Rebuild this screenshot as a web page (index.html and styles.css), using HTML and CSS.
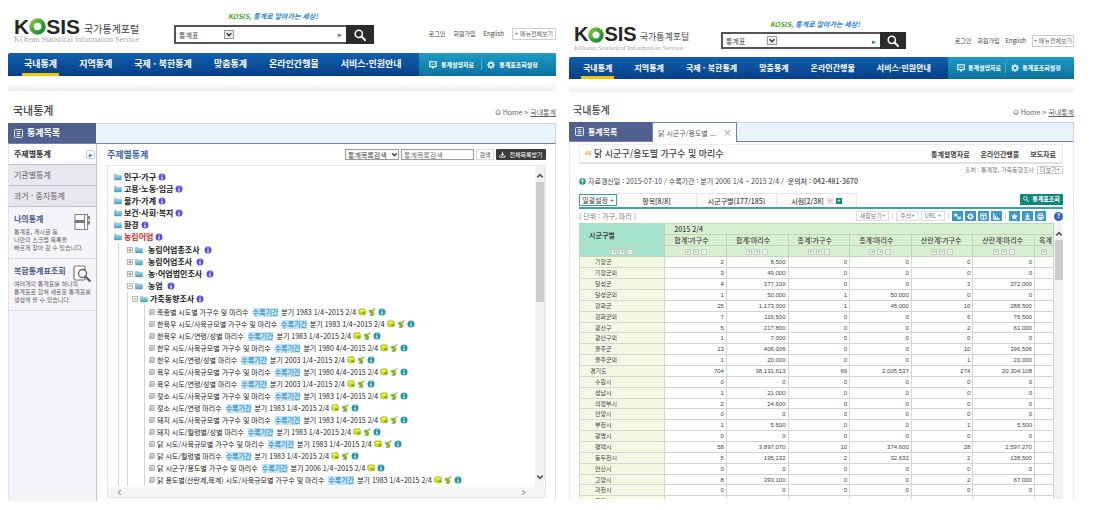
FILE: index.html
```html
<!DOCTYPE html>
<html lang="ko">
<head>
<meta charset="utf-8">
<title>KOSIS 국가통계포털</title>
<link rel="stylesheet" href="styles.css">
</head>
<body>
<svg class="defs" aria-hidden="true">
  <defs>
    <linearGradient id="green" x1="0" y1="0" x2="1" y2="1"><stop offset="0" stop-color="#8cc63a"/><stop offset=".5" stop-color="#3aa535"/><stop offset="1" stop-color="#12873a"/></linearGradient>
    <linearGradient id="blue" x1="0" y1="0" x2="0" y2="1"><stop offset="0" stop-color="#b5e2f2"/><stop offset="1" stop-color="#3f9cc4"/></linearGradient>
  </defs>
  <symbol id="i-search" viewBox="0 0 12 12"><circle cx="4.8" cy="4.8" r="3.6" fill="none" stroke="currentColor" stroke-width="1.5"/><path d="M7.5 7.5 11 11" stroke="currentColor" stroke-width="2" stroke-linecap="round"/></symbol>
  <symbol id="i-chev" viewBox="0 0 8 8"><path d="M1.3 2.6 4 5.4 6.7 2.6" fill="none" stroke="currentColor" stroke-width="1.6"/></symbol>
  <symbol id="i-board" viewBox="0 0 10 10"><path d="M1 1h8v6H6L5 9 4 7H1z" fill="none" stroke="currentColor" stroke-width="1.4"/><path d="M3 4h4" stroke="currentColor"/></symbol>
  <symbol id="i-gear" viewBox="0 0 10 10"><circle cx="5" cy="5" r="2.7" fill="none" stroke="currentColor" stroke-width="1.6"/><path d="M5 0v2M5 8v2M0 5h2M8 5h2M1.5 1.5l1.2 1.2M7.3 7.3l1.2 1.2M8.5 1.5 7.3 2.7M2.7 7.3 1.5 8.5" stroke="currentColor" stroke-width="1.3"/></symbol>
  <symbol id="i-list" viewBox="0 0 10 10"><rect x=".6" y=".6" width="8.8" height="8.8" rx="1" fill="none" stroke="currentColor"/><path d="M3 3h4M3 5h4M3 7h4" stroke="currentColor"/></symbol>
  <symbol id="i-home" viewBox="0 0 8 8"><path d="M.6 4 4 1l3.4 3M1.6 3.8V7h4.8V3.8M4 7V5" fill="none" stroke="currentColor" stroke-width=".9"/></symbol>
  <symbol id="i-folder" viewBox="0 0 8 7"><path d="M.4 1.2h2.8l.8 1h3.4v4.2H.4z" fill="url(#blue)" stroke="#5aa4c4" stroke-width=".6"/></symbol>
  <symbol id="i-info" viewBox="0 0 8 8"><circle cx="4" cy="4" r="3.5" fill="#5a4fd6"/><path d="M4 1.6v1M4 3.4v3" stroke="#fff" stroke-width="1.2"/></symbol>
  <symbol id="i-teal" viewBox="0 0 8 8"><circle cx="4" cy="4" r="3.5" fill="#2594a8"/><path d="M4 1.6v1M4 3.4v3" stroke="#fff" stroke-width="1.2"/></symbol>
  <symbol id="i-note" viewBox="0 0 8 8"><path d="M1.5.8h5L7.7 2.3v2.9L6.8 7H4L1.2 6.4.3 4.8V2.2z" fill="#cfd822" stroke="#a8b51c" stroke-width=".5"/><path d="M2 2.7h3.6" stroke="#fbffb0"/><path d="M4.3 5.2h3" stroke="#5e9427" stroke-width="1.2"/></symbol>
  <symbol id="i-leaf" viewBox="0 0 8 8"><path d="M7.4.4 4.5 2.2H1.2l.5 2.6h2L2 7.6h3.1l1-2.4-1.5-1.4z" fill="#86b82b" stroke="#5f9a22" stroke-width=".5"/></symbol>
  <symbol id="i-plus" viewBox="0 0 6 6"><rect x=".5" y=".5" width="5" height="5" fill="#fff" stroke="#999" stroke-width=".7"/><path d="M1.5 3h3M3 1.5v3" stroke="#555" stroke-width=".7"/></symbol>
  <symbol id="i-minus" viewBox="0 0 6 6"><rect x=".5" y=".5" width="5" height="5" fill="#fff" stroke="#999" stroke-width=".7"/><path d="M1.5 3h3" stroke="#555" stroke-width=".7"/></symbol>
  <symbol id="i-doc" viewBox="0 0 6 6"><rect x="1" y=".7" width="4.2" height="4.3" fill="#eee" stroke="#888" stroke-width=".7"/><path d="M2 2.2h2.4M2 3.6h2.4M.6 2v3.6h3.6" fill="none" stroke="#999" stroke-width=".6"/></symbol>
</svg>

<main class="screens">
<section class="screen">
  <header class="top">
    <a class="logo" href="#"><span class="mark">K<svg class="o" viewBox="0 0 16 16"><circle cx="8" cy="8" r="5.7" fill="none" stroke="url(#green)" stroke-width="4.2"/></svg>SIS</span><span class="name">국가통계포털</span><span class="sub">KOrean Statistical Information Service</span></a>
    <form class="find">
      <p class="slogan"><em>KOSIS,</em> 통계로 알아가는 세상!</p>
      <div class="bar">
        <label class="pick"><select aria-label="검색 구분"><option>통계표</option></select><svg><use href="#i-chev"/></svg></label>
        <input type="text" aria-label="검색어"><span class="tri">▸</span>
        <button type="button" aria-label="검색"><svg><use href="#i-search"/></svg></button>
      </div>
    </form>
    <nav class="util"><a href="#">로그인</a><a href="#">회원가입</a><a href="#">English</a><button type="button">+ 메뉴전체보기</button></nav>
  </header>
  <nav class="gnb">
    <div class="menu"><a class="on" href="#">국내통계</a><a href="#">지역통계</a><a href="#">국제 · 북한통계</a><a href="#">맞춤통계</a><a href="#">온라인간행물</a><a href="#">서비스·민원안내</a></div>
    <div class="quick"><a href="#"><svg><use href="#i-board"/></svg>통계설명자료</a><a href="#"><svg><use href="#i-gear"/></svg>통계표조회설정</a></div>
  </nav>
  <div class="strip"></div>
  <div class="head"><h1>국내통계</h1><p class="crumb"><svg><use href="#i-home"/></svg> Home &gt; <a href="#">국내통계</a></p></div>
  <div class="tabs"><a class="tab" href="#"><svg><use href="#i-list"/></svg>통계목록</a></div>
  <div class="body">
    <aside class="side">
      <a class="item on" href="#">주제별통계<span class="go">▸</span></a>
      <a class="item" href="#">기관별통계</a>
      <a class="item" href="#">과거 · 중지통계</a>
      <a class="card" href="#"><strong>나의통계</strong><span>통계표, 게시글 등<br>나만의 스크랩 목록을<br>빠르게 찾아 갈 수 있습니다.</span>
        <svg viewBox="0 0 18 18"><path d="M2 1.5h9.5v15H2zM11.5 1.5h3v15h-3" fill="#fff" stroke="#888" stroke-width="1.2"/><path d="M2 7h9.5v3H2z" fill="#777"/><path d="M14 3h3v3.5h-3zM14 8h3v3.5h-3z" fill="#888"/></svg></a>
      <a class="card" href="#"><strong>복합통계표조회</strong><span>여러개의 통계표를 하나의<br>통계표로 합쳐 새로운 통계표를<br>생성해 볼 수 있습니다.</span>
        <svg viewBox="0 0 18 18"><rect x="1" y="1" width="11" height="14" rx="1.5" fill="#fff" stroke="#777" stroke-width="1.2"/><circle cx="9.5" cy="8.5" r="4" fill="#f4f4f8" stroke="#666" stroke-width="1.3"/><path d="m12.5 11.7 4.3 4.3" stroke="#666" stroke-width="2.4" stroke-linecap="round"/></svg></a>
    </aside>
    <div class="content">
      <div class="tools"><h2>주제별통계</h2>
        <label class="mini"><select aria-label="목록 구분"><option>통계목록검색</option></select><svg><use href="#i-chev"/></svg></label>
        <input type="text" aria-label="목록 검색어" value="통계목록검색"><button type="button">검색</button>
        <button type="button" class="dark"><svg viewBox="0 0 8 8"><path d="M4 1v4M2.2 3.4 4 5.2l1.8-1.8M1 5v2h6V5" fill="none" stroke="currentColor"/></svg>전체목록받기</button></div>
      <div class="pane">
        <div class="view">
        <ul class="tree">
          <li><b><svg><use href="#i-folder"/></svg>인구·가구<svg><use href="#i-info"/></svg></b></li>
          <li><b><svg><use href="#i-folder"/></svg>고용·노동·임금<svg><use href="#i-info"/></svg></b></li>
          <li><b><svg><use href="#i-folder"/></svg>물가·가계<svg><use href="#i-info"/></svg></b></li>
          <li><b><svg><use href="#i-folder"/></svg>보건·사회·복지<svg><use href="#i-info"/></svg></b></li>
          <li><b><svg><use href="#i-folder"/></svg>환경<svg><use href="#i-info"/></svg></b></li>
          <li><b class="red"><svg><use href="#i-folder"/></svg>농림어업<svg><use href="#i-info"/></svg></b>
            <ul class="sub2">
              <li><b><svg class="ex"><use href="#i-plus"/></svg><svg><use href="#i-folder"/></svg><i>농림어업총조사</i><svg><use href="#i-info"/></svg></b></li>
              <li><b><svg class="ex"><use href="#i-plus"/></svg><svg><use href="#i-folder"/></svg><i>농림어업조사</i><svg><use href="#i-info"/></svg></b></li>
              <li><b><svg class="ex"><use href="#i-plus"/></svg><svg><use href="#i-folder"/></svg><i>농·어업법인조사</i><svg><use href="#i-info"/></svg></b></li>
              <li><b><svg class="ex"><use href="#i-minus"/></svg><svg><use href="#i-folder"/></svg><i>농업</i><svg><use href="#i-info"/></svg></b>
                <ul class="sub3"><li><b><svg class="ex"><use href="#i-minus"/></svg><svg><use href="#i-folder"/></svg>가축동향조사<svg><use href="#i-info"/></svg></b>
                  <ul class="leaves">
                    <li><svg class="ex"><use href="#i-doc"/></svg><a href="#">축종별 시도별 가구수 및 마리수</a><mark>수록기간</mark>분기 1983 1/4~2015 2/4<svg><use href="#i-note"/></svg><svg><use href="#i-leaf"/></svg><svg><use href="#i-teal"/></svg></li>
                    <li><svg class="ex"><use href="#i-doc"/></svg><a href="#">한육우 시도/사육규모별 가구수 및 마리수</a><mark>수록기간</mark>분기 1983 1/4~2015 2/4<svg><use href="#i-note"/></svg><svg><use href="#i-leaf"/></svg><svg><use href="#i-teal"/></svg></li>
                    <li><svg class="ex"><use href="#i-doc"/></svg><a href="#">한육우 시도/연령/성별 마리수</a><mark>수록기간</mark>분기 1983 1/4~2015 2/4<svg><use href="#i-note"/></svg><svg><use href="#i-leaf"/></svg><svg><use href="#i-teal"/></svg></li>
                    <li><svg class="ex"><use href="#i-doc"/></svg><a href="#">한우 시도/사육규모별 가구수 및 마리수</a><mark>수록기간</mark>분기 1980 4/4~2015 2/4<svg><use href="#i-note"/></svg><svg><use href="#i-leaf"/></svg><svg><use href="#i-teal"/></svg></li>
                    <li><svg class="ex"><use href="#i-doc"/></svg><a href="#">한우 시도/연령/성별 마리수</a><mark>수록기간</mark>분기 2003 1/4~2015 2/4<svg><use href="#i-note"/></svg><svg><use href="#i-leaf"/></svg><svg><use href="#i-teal"/></svg></li>
                    <li><svg class="ex"><use href="#i-doc"/></svg><a href="#">육우 시도/사육규모별 가구수 및 마리수</a><mark>수록기간</mark>분기 1980 4/4~2015 2/4<svg><use href="#i-note"/></svg><svg><use href="#i-leaf"/></svg><svg><use href="#i-teal"/></svg></li>
                    <li><svg class="ex"><use href="#i-doc"/></svg><a href="#">육우 시도/연령/성별 마리수</a><mark>수록기간</mark>분기 2003 1/4~2015 2/4<svg><use href="#i-note"/></svg><svg><use href="#i-leaf"/></svg><svg><use href="#i-teal"/></svg></li>
                    <li><svg class="ex"><use href="#i-doc"/></svg><a href="#">젖소 시도/사육규모별 가구수 및 마리수</a><mark>수록기간</mark>분기 1983 1/4~2015 2/4<svg><use href="#i-note"/></svg><svg><use href="#i-leaf"/></svg><svg><use href="#i-teal"/></svg></li>
                    <li><svg class="ex"><use href="#i-doc"/></svg><a href="#">젖소 시도/연령 마리수</a><mark>수록기간</mark>분기 1983 1/4~2015 2/4<svg><use href="#i-note"/></svg><svg><use href="#i-leaf"/></svg><svg><use href="#i-teal"/></svg></li>
                    <li><svg class="ex"><use href="#i-doc"/></svg><a href="#">돼지 시도/사육규모별 가구수 및 마리수</a><mark>수록기간</mark>분기 1983 1/4~2015 2/4<svg><use href="#i-note"/></svg><svg><use href="#i-leaf"/></svg><svg><use href="#i-teal"/></svg></li>
                    <li><svg class="ex"><use href="#i-doc"/></svg><a href="#">돼지 시도/월령별/성별 마리수</a><mark>수록기간</mark>분기 1983 1/4~2015 2/4<svg><use href="#i-note"/></svg><svg><use href="#i-leaf"/></svg><svg><use href="#i-teal"/></svg></li>
                    <li><svg class="ex"><use href="#i-doc"/></svg><a href="#">닭 시도/사육규모별 가구수 및 마리수</a><mark>수록기간</mark>분기 1983 1/4~2015 2/4<svg><use href="#i-note"/></svg><svg><use href="#i-leaf"/></svg><svg><use href="#i-teal"/></svg></li>
                    <li><svg class="ex"><use href="#i-doc"/></svg><a href="#">닭 시도/월령별 마리수</a><mark>수록기간</mark>분기 1983 1/4~2015 2/4<svg><use href="#i-note"/></svg><svg><use href="#i-leaf"/></svg><svg><use href="#i-teal"/></svg></li>
                    <li><svg class="ex"><use href="#i-doc"/></svg><a href="#">닭 시군구/용도별 가구수 및 마리수</a><mark>수록기간</mark>분기 2006 1/4~2015 2/4<svg><use href="#i-note"/></svg><svg><use href="#i-teal"/></svg></li>
                    <li><svg class="ex"><use href="#i-doc"/></svg><a href="#">닭 용도별(산란계,육계) 시도/사육규모별 가구수 및 마리수</a><mark>수록기간</mark>분기 1983 1/4~2015 2/4<svg><use href="#i-note"/></svg><svg><use href="#i-leaf"/></svg><svg><use href="#i-teal"/></svg></li>
                  </ul></li></ul></li>
            </ul></li>
        </ul>
        <div class="vbar"><svg class="flip"><use href="#i-chev"/></svg><span class="thumb"></span><svg><use href="#i-chev"/></svg></div>
        </div>
        <div class="hbar"><svg class="left"><use href="#i-chev"/></svg><svg class="right"><use href="#i-chev"/></svg></div>
      </div>
    </div>
  </div>
</section>

<section class="screen compact">
  <header class="top">
    <a class="logo" href="#"><span class="mark">K<svg class="o" viewBox="0 0 16 16"><circle cx="8" cy="8" r="5.7" fill="none" stroke="url(#green)" stroke-width="4.2"/></svg>SIS</span><span class="name">국가통계포털</span><span class="sub">KOrean Statistical Information Service</span></a>
    <form class="find">
      <p class="slogan"><em>KOSIS,</em> 통계로 알아가는 세상!</p>
      <div class="bar">
        <label class="pick"><select aria-label="검색 구분"><option>통계표</option></select><svg><use href="#i-chev"/></svg></label>
        <input type="text" aria-label="검색어"><span class="tri">▸</span>
        <button type="button" aria-label="검색"><svg><use href="#i-search"/></svg></button>
      </div>
    </form>
    <nav class="util"><a href="#">로그인</a><a href="#">회원가입</a><a href="#">English</a><button type="button">+ 메뉴전체보기</button></nav>
  </header>
  <nav class="gnb">
    <div class="menu"><a class="on" href="#">국내통계</a><a href="#">지역통계</a><a href="#">국제 · 북한통계</a><a href="#">맞춤통계</a><a href="#">온라인간행물</a><a href="#">서비스·민원안내</a></div>
    <div class="quick"><a href="#"><svg><use href="#i-board"/></svg>통계설명자료</a><a href="#"><svg><use href="#i-gear"/></svg>통계표조회설정</a></div>
  </nav>
  <div class="strip"></div>
  <div class="head"><h1>국내통계</h1><p class="crumb"><svg><use href="#i-home"/></svg> Home &gt; <a href="#">국내통계</a></p></div>
  <div class="tabs"><a class="tab" href="#"><svg><use href="#i-list"/></svg>통계목록</a><a class="tab open" href="#">닭 시군구/용도별 ...<span>×</span></a></div>
  <div class="sheet">
    <div class="caption"><span class="quote">“</span><h2>닭 시군구/용도별 가구수 및 마리수</h2><nav><a href="#">통계설명자료</a><a href="#">온라인간행물</a><a href="#">보도자료</a></nav></div>
    <p class="source">출처 : 통계청, 가축동향조사 <button type="button">더보기+</button></p>
    <p class="meta"><svg viewBox="0 0 8 8"><circle cx="4" cy="4" r="3.7" fill="#1fa05a"/><path d="M4 1.5v5M2.4 4 4 1.6 5.6 4" fill="none" stroke="#fff" stroke-width=".9"/></svg>자료갱신일 : 2015-07-10 / 수록기간 : 분기 2006 1/4 ~ 2015 2/4 / <b>문의처 : 042-481-3670</b></p>
    <div class="filters"><button type="button" class="all">일괄설정 +</button><a href="#">항목[8/8]</a><a href="#">시군구별(177/185)</a><a href="#">시점[2/38] <span class="sq">-</span><span class="sq teal">+</span></a><button type="button" class="query"><svg><use href="#i-search"/></svg>통계표조회</button></div>
    <div class="unit"><span>( 단위 : 가구, 마리 )</span>
      <div class="acts"><button type="button">새창보기+</button><i></i><button type="button">주석+</button><button type="button">URL +</button><i></i>
        <button type="button" class="ic" aria-label="회전"><svg viewBox="0 0 10 10"><path d="M2 5V2.5h3M8 5v2.5H5M3 3l4 4" fill="none" stroke="#fff" stroke-width="1.2"/></svg></button>
        <button type="button" class="ic" aria-label="설정"><svg viewBox="0 0 10 10"><use href="#i-gear" x="1" y="1" width="8" height="8"/></svg></button>
        <button type="button" class="ic" aria-label="표"><svg viewBox="0 0 10 10"><path d="M2 2h6v6H2zM2 4h6M5 4v4" fill="none" stroke="#fff"/></svg></button>
        <button type="button" class="ic" aria-label="차트"><svg viewBox="0 0 10 10"><path d="M2 1.5v6.5h6.5M4 8V4M6 8V5.5" fill="none" stroke="#fff" stroke-width="1.3"/></svg></button><i></i>
        <button type="button" class="ic" aria-label="스크랩"><svg viewBox="0 0 10 10"><path d="m5 1.3 1.2 2.5 2.6.3-2 1.8.6 2.7L5 7.2 2.6 8.6l.6-2.7-2-1.8 2.6-.3z" fill="#fff"/></svg></button>
        <button type="button" class="ic" aria-label="다운로드"><svg viewBox="0 0 10 10"><path d="M5 1v4.5M3 4l2 2 2-2M2 8h6" fill="none" stroke="#fff" stroke-width="1.4"/></svg></button>
        <button type="button" class="ic" aria-label="인쇄"><svg viewBox="0 0 10 10"><path d="M3 4V1.8h4V4M2 4h6v3H2zM3.5 6h3v2.3h-3z" fill="none" stroke="#fff"/></svg></button>
        <button type="button" class="help" aria-label="도움말">?</button></div></div>
    <div class="grid">
      <div class="clip">
      <table>
        <colgroup><col class="c0"><col class="c1"><col class="c1"><col class="c1"><col class="c1"><col class="c1"><col class="c1"><col class="c2"></colgroup>
        <thead>
          <tr><th class="key" rowspan="2">시군구별</th><th colspan="7">2015 2/4</th></tr>
          <tr><th>합계:가구수</th><th>합계:마리수</th><th>종계:가구수</th><th>종계:마리수</th><th>산란계:가구수</th><th>산란계:마리수</th><th class="last">육계</th></tr>
          <tr class="sort"><th class="key"><i>+</i><i>+</i><i>-</i></th><th><i>+</i><i>+</i><i>-</i></th><th><i>+</i><i>+</i><i>-</i></th><th><i>+</i><i>+</i><i>-</i></th><th><i>+</i><i>+</i><i>-</i></th><th><i>+</i><i>+</i><i>-</i></th><th><i>+</i><i>+</i><i>-</i></th><th><i>+</i></th></tr>
        </thead>
        <tbody>
          <tr><th>기장군</th><td>2</td><td>8,500</td><td>0</td><td>0</td><td>0</td><td>0</td><td></td></tr>
          <tr><th>기장군외</th><td>3</td><td>49,000</td><td>0</td><td>0</td><td>0</td><td>0</td><td></td></tr>
          <tr><th>달성군</th><td>4</td><td>377,100</td><td>0</td><td>0</td><td>3</td><td>372,000</td><td></td></tr>
          <tr><th>달성군외</th><td>1</td><td>50,000</td><td>1</td><td>50,000</td><td>0</td><td>0</td><td></td></tr>
          <tr><th>강화군</th><td>25</td><td>1,173,000</td><td>1</td><td>45,000</td><td>10</td><td>288,500</td><td></td></tr>
          <tr><th>강화군외</th><td>7</td><td>116,500</td><td>0</td><td>0</td><td>6</td><td>76,500</td><td></td></tr>
          <tr><th>광산구</th><td>5</td><td>217,800</td><td>0</td><td>0</td><td>2</td><td>61,000</td><td></td></tr>
          <tr><th>광산구외</th><td>1</td><td>7,000</td><td>0</td><td>0</td><td>0</td><td>0</td><td></td></tr>
          <tr><th>울주군</th><td>13</td><td>406,006</td><td>0</td><td>0</td><td>10</td><td>396,506</td><td></td></tr>
          <tr><th>울주군외</th><td>1</td><td>20,000</td><td>0</td><td>0</td><td>1</td><td>20,000</td><td></td></tr>
          <tr><th class="sum">경기도</th><td>704</td><td>38,131,613</td><td>69</td><td>2,005,537</td><td>274</td><td>20,304,108</td><td></td></tr>
          <tr><th>수원시</th><td>0</td><td>0</td><td>0</td><td>0</td><td>0</td><td>0</td><td></td></tr>
          <tr><th>성남시</th><td>1</td><td>21,000</td><td>0</td><td>0</td><td>0</td><td>0</td><td></td></tr>
          <tr><th>의정부시</th><td>2</td><td>24,600</td><td>0</td><td>0</td><td>0</td><td>0</td><td></td></tr>
          <tr><th>안양시</th><td>0</td><td>0</td><td>0</td><td>0</td><td>0</td><td>0</td><td></td></tr>
          <tr><th>부천시</th><td>1</td><td>5,500</td><td>0</td><td>0</td><td>1</td><td>5,500</td><td></td></tr>
          <tr><th>광명시</th><td>0</td><td>0</td><td>0</td><td>0</td><td>0</td><td>0</td><td></td></tr>
          <tr><th>평택시</th><td>58</td><td>3,897,070</td><td>10</td><td>374,600</td><td>28</td><td>2,597,270</td><td></td></tr>
          <tr><th>동두천시</th><td>5</td><td>195,132</td><td>2</td><td>32,632</td><td>2</td><td>138,500</td><td></td></tr>
          <tr><th>안산시</th><td>0</td><td>0</td><td>0</td><td>0</td><td>0</td><td>0</td><td></td></tr>
          <tr><th>고양시</th><td>8</td><td>393,100</td><td>0</td><td>0</td><td>2</td><td>67,000</td><td></td></tr>
          <tr><th>과천시</th><td>0</td><td>0</td><td>0</td><td>0</td><td>0</td><td>0</td><td></td></tr>
          <tr><th>구리시</th><td>0</td><td>0</td><td>0</td><td>0</td><td>0</td><td>0</td><td></td></tr>
        </tbody>
      </table>
      </div>
      <div class="vbar"><svg class="flip"><use href="#i-chev"/></svg><span class="thumb"></span></div>
    </div>
  </div>
</section>
</main>
</body>
</html>
```
FILE: styles.css
```css
* { box-sizing: border-box; }
body { margin: 0; background: #fff; color: #444; font: 7px/10px "Noto Sans CJK KR", "Liberation Sans", sans-serif; }
h1, h2, p, ul { margin: 0; padding: 0; }
ul { list-style: none; }
a { color: inherit; text-decoration: none; }
i, em { font-style: normal; }
button, input, select { margin: 0; padding: 0; border: 0; border-radius: 0; background: none; color: inherit; font: inherit; appearance: none; min-width: 0; }
svg { display: block; flex: none; width: 7px; height: 7px; }
.defs { position: absolute; width: 0; height: 0; }

.screens { display: grid; grid-template-columns: 548fr 505fr; gap: 13px; padding: 0 19px 0 8px; }
.screen { min-width: 0; display: flex; flex-direction: column; white-space: nowrap; }

/* header */
.top { display: flex; align-items: flex-start; height: 53px; padding: 11px 0 0 6px; }
.logo { display: grid; grid-template-columns: auto 1fr; align-items: end; column-gap: 4px; width: 126px; padding-top: 6px; color: #262626; }
.mark { display: flex; align-items: center; font: bold 21px/19px "Liberation Sans", sans-serif; }
.o { width: 17px; height: 17px; }
.name { color: #444; font-size: 10px; line-height: 15px; }
.sub { grid-column: 1 / -1; color: #aaa; font: 8px/8px "Liberation Serif", serif; }
.find { width: 200px; margin-left: 34px; }
.slogan { padding-left: 54px; color: #2f86c5; font-size: 7px; font-style: italic; font-weight: bold; }
.slogan em { color: #4ca52c; font-style: italic; }
.bar { display: flex; align-items: stretch; height: 19px; margin-top: 4px; border: 2px solid #555; }
.pick { display: flex; align-items: center; width: 58px; padding-left: 3px; }
.pick select { flex: 1; font-size: 7px; }
.pick svg { width: 10px; height: 9px; border: 1px solid #999; background: #eee; color: #333; }
.bar input { flex: 1; }
.tri { width: 8px; color: #28708c; line-height: 15px; }
.bar button { display: grid; place-items: center; width: 28px; margin: -2px -2px -2px 0; background: #2b2b2b; color: #fff; }
.bar button svg { width: 12px; height: 12px; }
.util { display: flex; align-items: center; gap: 8px; margin-left: auto; padding-top: 17px; font-size: 6px; }
.util button { height: 12px; padding: 0 2px; border: 1px solid #ccc; color: #666; }

.gnb { display: flex; height: 23px; color: #fff; font-weight: bold; border-radius: 2px 2px 0 0; background: linear-gradient(#0f60ae, #073f87); }
.menu { flex: 1; display: flex; gap: 18px; padding-left: 14px; font-size: 9px; line-height: 22px; }
.menu a { padding: 0 2px; }
.menu .on { border-bottom: 3px solid #f5c400; }
.quick { display: flex; align-items: center; width: 137px; padding-left: 10px; gap: 7px; background: linear-gradient(#1f9cc6, #0b719f); font-size: 6px; border-radius: 0 2px 0 0; }
.quick a { display: flex; align-items: center; gap: 4px; }
.quick a + a { border-left: 1px solid #4bb0d0; padding-left: 5px; }
.quick svg { width: 8px; height: 8px; }
.strip { height: 15px; background: linear-gradient(#fff 40%, #f0efef); }

.head { display: flex; align-items: center; justify-content: space-between; height: 32px; padding: 6px 0 0 5px; }
.head h1 { font-size: 11px; line-height: 16px; font-weight: 500; }
.crumb { display: flex; align-items: center; gap: 2px; padding-top: 3px; color: #666; }
.crumb svg { width: 6px; height: 6px; }
.crumb a { text-decoration: underline; }

.tabs { display: flex; height: 21px; border: 1px solid #ccd3dd; border-bottom-color: #7282b0; background: #e9f3fc; }
.tab { display: flex; align-items: center; gap: 4px; width: 88px; margin: -1px 0 0 -1px; padding-left: 6px; background: #50618f; color: #fff; font-size: 9px; font-weight: bold; }
.tab svg { width: 9px; height: 9px; }

/* statistics list */
.body { display: flex; height: 357px; border: 1px solid #e2e2e8; border-width: 0 1px 0 1px; }
.side { width: 88px; border-right: 1px solid #c9c9d4; background: #f4f4f9; color: #666; }
.item { display: flex; align-items: center; justify-content: space-between; height: 21px; padding: 0 1px 0 5px; border-bottom: 1px solid #bfbfc9; background: #e8e7ee; font-size: 8px; }
.item.on { background: #fff; color: #333; font-weight: bold; }
.go { width: 9px; height: 9px; border: 1px solid #b7cfe4; border-radius: 2px; color: #3171a9; font-size: 6px; line-height: 7px; text-align: center; }
.card { position: relative; display: block; height: 52px; padding: 7px 0 0 5px; border-bottom: 1px solid #dcdce4; font-size: 6px; line-height: 8px; }
.card strong { display: block; margin-bottom: 4px; color: #4a5a8c; font-size: 8px; line-height: 10px; }
.card svg { position: absolute; top: 6px; right: 5px; width: 18px; height: 18px; }
.content { flex: 1; min-width: 0; display: flex; flex-direction: column; padding: 0 9px 3px 10px; }
.tools { display: flex; align-items: center; gap: 2px; height: 21px; }
.tools h2 { margin-right: auto; color: #4367ae; font-size: 9px; }
.mini, .tools input, .tools button { height: 11px; border: 1px solid #999; }
.mini { display: flex; align-items: center; width: 54px; padding-left: 2px; }
.mini select { flex: 1; }
.tools input { width: 73px; padding-left: 2px; color: #777; }
.tools button { width: 18px; border-color: #ddd; font-size: 6px; line-height: 8px; }
.tools .dark { display: flex; align-items: center; justify-content: center; gap: 3px; width: 50px; border: 0; border-radius: 1px; background: #3a3a3a; color: #fff; }
.pane { flex: 1; display: flex; flex-direction: column; border: 1px solid #e6e6e6; }
.view { flex: 1; display: flex; justify-content: space-between; }
.tree { padding: 5px 0 0 6px; color: #222; }
.tree svg { width: 8px; height: 8px; }
.tree b { display: flex; align-items: center; gap: 2px; height: 12px; font-size: 8px; }
.tree b i { padding: 0 2px 0 3px; }
.tree .red { color: #d22a2a; }
.tree .ex { width: 6px; height: 6px; }
.sub2 { margin-left: 4px; padding: 1px 0 0 8px; border-left: 1px solid #d5d5d5; }
.sub3 { padding: 1px 0 0 4px; border-left: 1px solid #d5d5d5; }
.leaves { margin-left: 12px; padding-top: 1px; border-left: 1px solid #d5d5d5; }
.leaves li { display: flex; align-items: center; gap: 2px; height: 12px; padding-left: 4px; }
.leaves mark { margin: 0 1px 0 2px; background: #bfe6f7; color: #1979b3; font-size: 7px; line-height: 9px; }
.vbar { display: flex; flex-direction: column; align-items: center; width: 10px; padding: 6px 0; background: #f2f2f2; color: #555; }
.vbar svg { width: 8px; height: 8px; }
.vbar .thumb { width: 8px; height: 120px; margin: 2px 0 auto; background: #cdcdcd; }
.flip { transform: rotate(180deg); }
.hbar { display: flex; justify-content: space-between; align-items: center; height: 10px; padding: 0 18px 0 8px; background: #f6f6f6; color: #aaa; }
.left { transform: rotate(90deg); }
.right { transform: rotate(-90deg); }

/* compact header of the table screen */
.compact .top { height: 57px; padding-top: 19px; padding-left: 5px; }
.compact .logo { width: 118px; column-gap: 3px; }
.compact .mark { font-size: 20px; }
.compact .o { width: 16px; height: 16px; }
.compact .name { font-size: 9px; }
.compact .sub { font-size: 7px; }
.compact .find { width: 185px; margin-left: 29px; }
.compact .slogan { padding-left: 49px; }
.compact .bar { height: 17px; margin-top: 3px; }
.compact .pick { width: 54px; }
.compact .bar button { width: 26px; }
.compact .util { gap: 6px; padding-top: 16px; }
.compact .util button { padding: 0 1px; }
.compact .gnb { height: 22px; }
.compact .menu { gap: 18px; padding-left: 12px; font-size: 8px; line-height: 21px; }
.compact .quick { width: 126px; padding-left: 9px; gap: 4px; }
.compact .quick a { gap: 3px; }
.compact .strip { height: 13px; }
.compact .head { height: 30px; padding-left: 4px; }
.compact .head h1 { font-size: 10px; }
.compact .tabs { height: 20px; }
.compact .tab { width: 83px; font-size: 8px; }
.compact .open { justify-content: space-between; width: 85px; margin: -1px 0 -1px 0; padding: 0 4px 0 5px; border: 1px solid #7282b0; border-bottom: 0; background: #fff; color: #555; font-size: 7px; font-weight: normal; }
.open span { color: #888; font-size: 9px; }

/* data sheet */
.sheet { padding: 2px 10px 0 9px; border: 1px solid #e4e4ea; border-width: 0 1px; }
.caption { display: flex; align-items: center; height: 20px; padding: 0 6px 0 5px; border: 1px solid #ececec; border-bottom: 2px solid #e2e2e2; }
.quote { width: 9px; height: 16px; color: #eda95c; font: bold 14px/20px "Liberation Serif", serif; }
.caption h2 { font-size: 9px; font-weight: 500; }
.caption nav { display: flex; gap: 11px; margin-left: auto; font-size: 7px; font-weight: bold; }
.source { display: flex; justify-content: flex-end; align-items: center; gap: 3px; height: 12px; color: #777; font-size: 6px; }
.source button { height: 8px; padding: 0 2px; border: 1px solid #ccc; line-height: 6px; }
.meta { display: flex; align-items: center; gap: 2px; height: 10px; white-space: pre; }
.meta b { font-weight: 500; }
.filters { display: flex; align-items: center; height: 16px; margin-top: 7px; border-bottom: 2px solid #3aa3a3; }
.filters a { display: flex; align-items: center; justify-content: center; gap: 3px; width: 80px; height: 14px; border: 1px solid #e6e6e6; border-width: 1px 1px 0 0; background: #fafafa; font-weight: 500; }
.all { width: 38px; height: 12px; border: 1px solid #3aa38f; font-size: 7px; line-height: 9px; }
.sq { width: 6px; height: 6px; background: #f3dada; color: #b66; font-size: 6px; line-height: 5px; text-align: center; }
.sq.teal { background: #16877c; color: #fff; }
.query { display: flex; align-items: center; justify-content: center; gap: 3px; width: 43px; height: 11px; margin-left: auto; margin-bottom: 2px; background: #11877a; color: #fff; font-size: 6px; font-weight: bold; }
.query svg { width: 6px; height: 6px; }
.unit { display: flex; align-items: center; justify-content: space-between; height: 14px; color: #777; font-size: 7px; }
.acts { display: flex; align-items: center; gap: 2px; font-size: 6px; }
.acts button { height: 10px; padding: 0 3px; border: 1px solid #ddd; line-height: 8px; }
.acts i { width: 1px; height: 6px; margin: 0 1px; background: #ddd; }
.acts .ic { display: grid; place-items: center; width: 11px; padding: 0; border: 0; background: #3d97c9; color: #fff; }
.acts .ic svg { width: 9px; height: 9px; }
.acts .help { width: 9px; height: 9px; margin-left: 6px; padding: 0; border: 0; border-radius: 50%; background: #3a62b8; color: #fff; font-weight: bold; }
.grid { display: flex; max-height: 276px; overflow: hidden; }
.clip { flex: 1; min-width: 0; overflow: hidden; }
table { width: 100%; table-layout: fixed; border-collapse: collapse; line-height: 8px; }
.c0 { width: 18%; }
.c1 { width: 13%; }
th, td { height: 11px; padding: 0 2px 0 0; border: 1px solid #d5d5d5; overflow: hidden; }
thead th { padding-left: 9px; background: #d9efd2; border-color: #bcd8b8; font-weight: 500; text-align: left; }
thead .key { background: #a6e3cc; font-weight: bold; }
thead .last { padding: 0 0 0 4px; }
.sort th { padding: 0; text-align: center; }
.sort i { display: inline-block; width: 6px; height: 6px; margin: 0 1px; border: 1px solid #c5cfc2; background: #f4faf1; color: #999; font-size: 6px; line-height: 4px; vertical-align: middle; }
tbody th { padding-left: 15px; background: #f4f8e2; font-size: 6px; font-weight: normal; text-align: left; }
tbody .sum { padding-left: 10px; }
td { font: 6px/8px "Liberation Sans", sans-serif; text-align: right; }
tbody tr:nth-child(7n) > * { height: 10px; }
.grid .vbar { width: 9px; padding-top: 7px; }
.grid .thumb { height: 40px; }
```
